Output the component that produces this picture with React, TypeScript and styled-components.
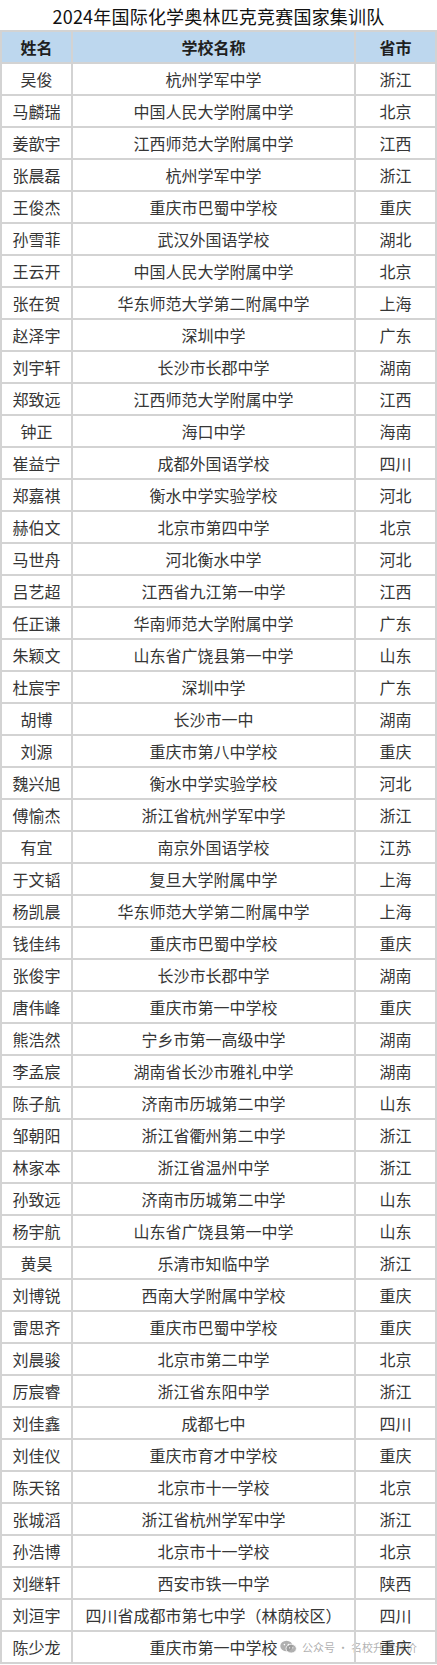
import React from "react";
import styled, { createGlobalStyle } from "styled-components";

const GlobalStyle = createGlobalStyle`
  html, body { margin: 0; padding: 0; background: #ffffff; }
  body { font-family: "Noto Sans CJK SC", "Noto Sans", sans-serif; }
  * { box-sizing: border-box; }
`;

const Page = styled.div`
  position: relative;
  width: 437px;
  height: 1665px;
  background: #ffffff;
`;

const Title = styled.h1`
  margin: 0;
  height: 30px;
  line-height: 32px;
  font-size: 18px;
  font-weight: 400;
  color: #111111;
  text-align: center;
  letter-spacing: 0.2px;
`;

const Table = styled.div`
  position: relative;
  z-index: 1;
  border-left: 2px solid #d3d3d3;
  border-top: 2px solid #d3d3d3;
  width: 437px;
`;

const Row = styled.div<{ $head?: boolean }>`
  display: grid;
  grid-template-columns: 71px 283px 81px;
  height: 32px;
  background: ${(p) => (p.$head ? "#bdd7ee" : "transparent")};
`;

const Cell = styled.div<{ $head?: boolean }>`
  border-right: 2px solid #d3d3d3;
  border-bottom: 2px solid #d3d3d3;
  display: flex;
  align-items: center;
  justify-content: center;
  font-size: 16px;
  line-height: 1;
  white-space: nowrap;
  font-weight: ${(p) => (p.$head ? 700 : 400)};
  color: ${(p) => (p.$head ? "#1f1f1f" : "#363636")};
`;

const Watermark = styled.div`
  position: absolute;
  z-index: 0;
  left: 280px;
  top: 1639px;
  display: flex;
  align-items: center;
  gap: 5px;
  font-size: 11px;
  color: rgba(150, 150, 150, 0.75);
  pointer-events: none;
  white-space: nowrap;
`;

const rows: [string, string, string][] = [
  ["吴俊", "杭州学军中学", "浙江"],
  ["马麟瑞", "中国人民大学附属中学", "北京"],
  ["姜歆宇", "江西师范大学附属中学", "江西"],
  ["张晨磊", "杭州学军中学", "浙江"],
  ["王俊杰", "重庆市巴蜀中学校", "重庆"],
  ["孙雪菲", "武汉外国语学校", "湖北"],
  ["王云开", "中国人民大学附属中学", "北京"],
  ["张在贺", "华东师范大学第二附属中学", "上海"],
  ["赵泽宇", "深圳中学", "广东"],
  ["刘宇轩", "长沙市长郡中学", "湖南"],
  ["郑致远", "江西师范大学附属中学", "江西"],
  ["钟正", "海口中学", "海南"],
  ["崔益宁", "成都外国语学校", "四川"],
  ["郑嘉祺", "衡水中学实验学校", "河北"],
  ["赫伯文", "北京市第四中学", "北京"],
  ["马世舟", "河北衡水中学", "河北"],
  ["吕艺超", "江西省九江第一中学", "江西"],
  ["任正谦", "华南师范大学附属中学", "广东"],
  ["朱颖文", "山东省广饶县第一中学", "山东"],
  ["杜宸宇", "深圳中学", "广东"],
  ["胡博", "长沙市一中", "湖南"],
  ["刘源", "重庆市第八中学校", "重庆"],
  ["魏兴旭", "衡水中学实验学校", "河北"],
  ["傅愉杰", "浙江省杭州学军中学", "浙江"],
  ["有宜", "南京外国语学校", "江苏"],
  ["于文韬", "复旦大学附属中学", "上海"],
  ["杨凯晨", "华东师范大学第二附属中学", "上海"],
  ["钱佳纬", "重庆市巴蜀中学校", "重庆"],
  ["张俊宇", "长沙市长郡中学", "湖南"],
  ["唐伟峰", "重庆市第一中学校", "重庆"],
  ["熊浩然", "宁乡市第一高级中学", "湖南"],
  ["李孟宸", "湖南省长沙市雅礼中学", "湖南"],
  ["陈子航", "济南市历城第二中学", "山东"],
  ["邹朝阳", "浙江省衢州第二中学", "浙江"],
  ["林家本", "浙江省温州中学", "浙江"],
  ["孙致远", "济南市历城第二中学", "山东"],
  ["杨宇航", "山东省广饶县第一中学", "山东"],
  ["黄昊", "乐清市知临中学", "浙江"],
  ["刘博锐", "西南大学附属中学校", "重庆"],
  ["雷思齐", "重庆市巴蜀中学校", "重庆"],
  ["刘晨骏", "北京市第二中学", "北京"],
  ["厉宸睿", "浙江省东阳中学", "浙江"],
  ["刘佳鑫", "成都七中", "四川"],
  ["刘佳仪", "重庆市育才中学校", "重庆"],
  ["陈天铭", "北京市十一学校", "北京"],
  ["张城滔", "浙江省杭州学军中学", "浙江"],
  ["孙浩博", "北京市十一学校", "北京"],
  ["刘继轩", "西安市铁一中学", "陕西"],
  ["刘洹宇", "四川省成都市第七中学（林荫校区）", "四川"],
  ["陈少龙", "重庆市第一中学校", "重庆"],
];

const WeChatIcon = () => (
  <svg width="17" height="14" viewBox="0 0 17 14" aria-hidden="true">
    <ellipse cx="6.5" cy="6" rx="6.2" ry="5.2" fill="rgba(150,150,150,0.75)" />
    <ellipse cx="11.2" cy="8.6" rx="5.2" ry="4.4" fill="rgba(150,150,150,0.75)" stroke="#ffffff" strokeWidth="0.8" />
    <circle cx="4.4" cy="4.6" r="0.8" fill="#fff" />
    <circle cx="8.4" cy="4.6" r="0.8" fill="#fff" />
    <circle cx="9.6" cy="7.8" r="0.6" fill="#fff" />
    <circle cx="12.8" cy="7.8" r="0.6" fill="#fff" />
  </svg>
);

export default function App() {
  return (
    <Page>
      <GlobalStyle />
      <Title>2024年国际化学奥林匹克竞赛国家集训队</Title>
      <Table>
        <Row $head>
          <Cell $head>姓名</Cell>
          <Cell $head>学校名称</Cell>
          <Cell $head>省市</Cell>
        </Row>
        {rows.map(([n, s, p], i) => (
          <Row key={i}>
            <Cell>{n}</Cell>
            <Cell>{s}</Cell>
            <Cell>{p}</Cell>
          </Row>
        ))}
      </Table>
      <Watermark>
        <WeChatIcon />
        <span>公众号 · 名校升学评价</span>
      </Watermark>
    </Page>
  );
}
